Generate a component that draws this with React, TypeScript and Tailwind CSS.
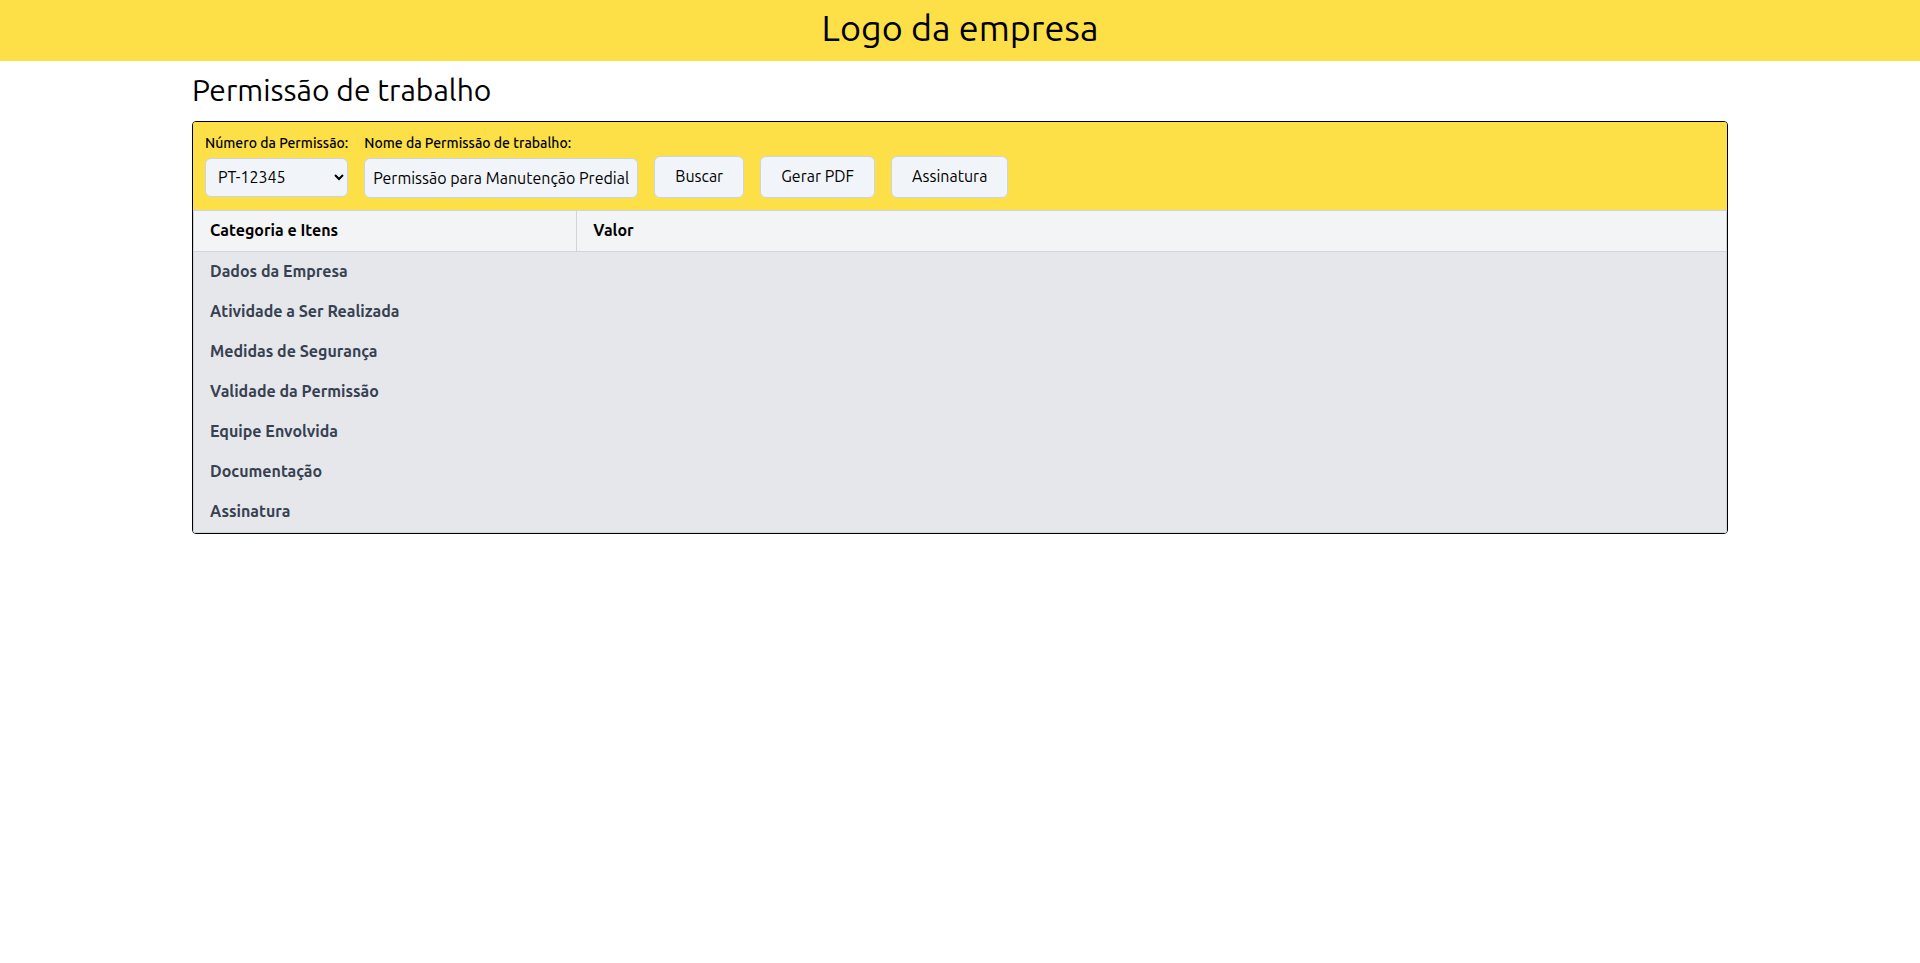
import { useState } from 'react';

const categories = [
  'Dados da Empresa',
  'Atividade a Ser Realizada',
  'Medidas de Segurança',
  'Validade da Permissão',
  'Equipe Envolvida',
  'Documentação',
  'Assinatura',
];

const actions = ['Buscar', 'Gerar PDF', 'Assinatura'];

export default function App() {
  const [permitName, setPermitName] = useState('Permissão para Manutenção Predial');

  return (
    <div className="font-['Ubuntu','Roboto','Noto_Sans',sans-serif] text-base font-normal text-black">
      <header className="bg-[#fde047] pt-2 pb-[13px] text-center">
        <h1 className="text-4xl">Logo da empresa</h1>
      </header>
      <main className="mx-auto w-4/5">
        <h2 className="pt-[11px] pb-[13px] text-3xl">Permissão de trabalho</h2>
        <section className="overflow-hidden rounded border border-black">
          <form
            className="flex flex-wrap items-end gap-4 bg-[#fde047] px-3 pt-[11px] pb-3"
            onSubmit={(e) => e.preventDefault()}
          >
            <div className="flex flex-col gap-[5px]">
              <label htmlFor="permit-number" className="text-sm leading-5 font-medium">
                Número da Permissão:
              </label>
              <select
                id="permit-number"
                className="mb-px h-[39px] w-full rounded-md border border-[#cbd5e1] bg-[#f1f5f9] px-2 pb-px"
              >
                <option>PT-12345</option>
              </select>
            </div>
            <div className="flex flex-col gap-[5px]">
              <label htmlFor="permit-name" className="text-sm leading-5 font-medium">
                Nome da Permissão de trabalho:
              </label>
              <input
                id="permit-name"
                type="text"
                value={permitName}
                onChange={(e) => setPermitName(e.target.value)}
                className="h-10 w-[274px] rounded-md border border-[#cbd5e1] bg-[#f1f5f9] px-2"
              />
            </div>
            {actions.map((action) => (
              <button
                key={action}
                type="button"
                className="rounded-md border border-[#cbd5e1] bg-[#f1f5f9] px-5 pt-[7px] pb-[9px]"
              >
                {action}
              </button>
            ))}
          </form>
          <table className="w-full table-fixed border-collapse text-left">
            <thead className="bg-[#f3f4f6]">
              <tr>
                <th className="w-1/4 border border-[#d1d5db] px-4 pt-[7px] pb-[9px] font-semibold">Categoria e Itens</th>
                <th className="border border-[#d1d5db] px-4 pt-[7px] pb-[9px] font-semibold">Valor</th>
              </tr>
            </thead>
            <tbody className="border border-[#d1d5db] bg-[#e5e7eb] text-[#374151]">
              {categories.map((category) => (
                <tr key={category}>
                  <td colSpan={2} className="px-4 pt-[7px] pb-[9px] font-semibold">
                    {category}
                  </td>
                </tr>
              ))}
            </tbody>
          </table>
        </section>
      </main>
    </div>
  );
}
